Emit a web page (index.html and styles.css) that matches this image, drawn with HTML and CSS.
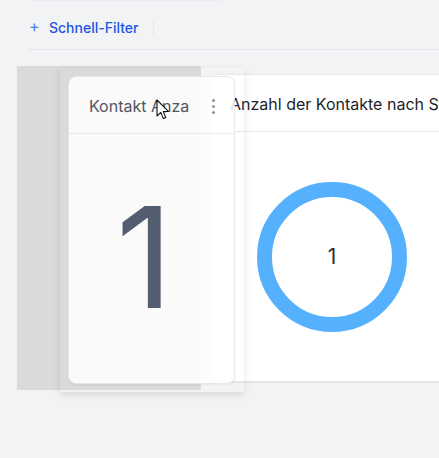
FILE: index.html
```html
<!DOCTYPE html>
<html lang="de">
<head>
<meta charset="utf-8">
<title>Dashboard</title>
<link rel="stylesheet" href="styles.css">
</head>
<body>
<div class="top-edge"></div>
<div class="toolbar">
  <button class="quick-filter"><span class="plus">+</span><span>Schnell-Filter</span></button>
  <span class="sep"></span>
</div>
<div class="rule"></div>
<div class="grid">
  <div class="placeholder"></div>
  <div class="tile">
    <div class="card">
      <div class="card-head"><span class="title dark">Anzahl der Kontakte nach Status</span></div>
      <div class="card-body">
        <div class="donut">
          <svg width="150" height="150" viewBox="0 0 150 150">
            <circle cx="75" cy="75" r="67.5" fill="none" stroke="#55b1fd" stroke-width="15"/>
          </svg>
          <span class="donut-value">1</span>
        </div>
      </div>
    </div>
  </div>
</div>

<div class="ghost">
  <div class="card ghost-card">
    <div class="card-head">
      <span class="title muted">Kontakt Anzahl</span>
      <span class="kebab"><i></i><i></i><i></i></span>
    </div>
    <div class="card-body">
      <span class="big-number">1</span>
    </div>
  </div>
</div>

<svg class="cursor" width="14" height="22" viewBox="0 0 14 22">
  <path d="M1 1 L1 17 L4.8 13.4 L7.4 19.6 L9.8 18.6 L7.3 12.6 L12.4 12.4 Z" fill="#ffffff" stroke="#111111" stroke-width="1.1" stroke-linejoin="round"/>
</svg>
</body>
</html>
```

FILE: styles.css
```css
html, body {
  margin: 0;
  padding: 0;
  overflow: hidden;
}
body {
  width: 439px;
  height: 458px;
  background: #f2f3f5;
  font-family: Inter, "Noto Sans", "Liberation Sans", sans-serif;
  position: relative;
}
.top-edge {
  height: 1px;
  margin-left: 32px;
  width: 190px;
  background: #ecedf0;
}
.toolbar {
  height: 48px;
  box-sizing: border-box;
  padding-top: 4px;
  padding-left: 29px;
  display: flex;
  align-items: center;
}
.quick-filter {
  border: 0;
  background: none;
  padding: 0;
  margin: 0;
  display: flex;
  align-items: center;
  font-family: inherit;
  font-size: 14px;
  font-weight: 500;
  color: #1d55e5;
  cursor: pointer;
}
.plus {
  font-size: 16px;
  font-weight: 400;
  color: #4a7df0;
  width: 20px;
  text-align: left;
  position: relative;
  top: -1px;
}
.sep {
  width: 1px;
  height: 17px;
  background: #e4e6ea;
  margin-left: 14px;
}
.rule {
  height: 1px;
  margin-left: 29px;
  background: #e3e5e9;
}
.grid {
  display: flex;
  margin-top: 16px;
  margin-left: 17px;
}
.placeholder {
  width: 184px;
  height: 324px;
  background: #d9dadc;
  flex: none;
}
.tile {
  flex: none;
  padding: 8px 0 8px 9px;
}
.card {
  background: #ffffff;
  border: 1px solid #e5e7eb;
  border-radius: 8px;
  box-shadow: 0 1px 2px rgba(0,0,0,0.06);
  box-sizing: border-box;
  height: 308px;
  display: flex;
  flex-direction: column;
  overflow: hidden;
}
.tile .card {
  width: 320px;
  border-right: 0;
  border-radius: 8px 0 0 8px;
}
.card-head {
  height: 57px;
  flex: none;
  box-sizing: border-box;
  border-bottom: 1px solid #e8e9ec;
  display: flex;
  align-items: center;
  padding-left: 19px;
  padding-top: 2px;
}
.title {
  font-size: 16px;
  white-space: nowrap;
  overflow: hidden;
}
.dark { color: #1c1f2a; }
.muted { color: #3d4250; }
.card-body {
  flex: 1;
  display: flex;
  align-items: center;
}
.donut {
  position: relative;
  width: 150px;
  height: 150px;
  margin-left: 46px;
}
.donut svg { display: block; }
.donut-value {
  position: absolute;
  inset: 0;
  display: flex;
  align-items: center;
  justify-content: center;
  font-size: 21px;
  color: #2b2f38;
}
.ghost {
  position: absolute;
  left: 60px;
  top: 68px;
  width: 184px;
  height: 324px;
  box-sizing: border-box;
  padding: 8px 9px 8px 8px;
  box-shadow: 0 3px 7px rgba(0,0,0,0.12);
  opacity: 0.87;
}
.ghost-card {
  width: 167px;
  height: 308px;
}
.ghost-card .card-head {
  padding-left: 20px;
  padding-right: 8px;
}
.ghost-card .title {
  width: 100px;
  flex: none;
}
.kebab {
  margin-left: 23px;
  display: flex;
  flex-direction: column;
  gap: 3px;
}
.kebab i {
  display: block;
  width: 3px;
  height: 3px;
  border-radius: 50%;
  background: #7d828e;
}
.ghost-card .card-body {
  justify-content: center;
}
.big-number {
  font-size: 140px;
  line-height: 1;
  color: #3f4c60;
  margin-left: -14px;
  position: relative;
  top: -2px;
}
.cursor {
  position: absolute;
  left: 156px;
  top: 99px;
}
```
